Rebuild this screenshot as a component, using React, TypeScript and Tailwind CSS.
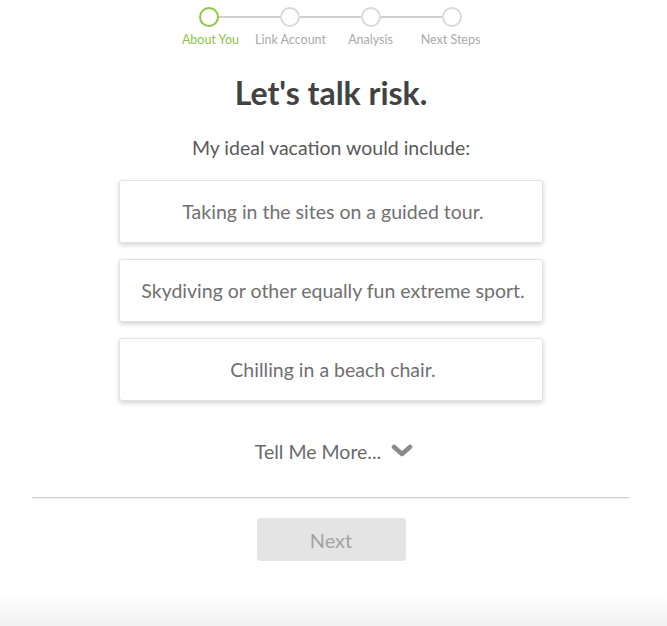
import React from "react";

const steps = ["About You", "Link Account", "Analysis", "Next Steps"];
const options = [
  "Taking in the sites on a guided tour.",
  "Skydiving or other equally fun extreme sport.",
  "Chilling in a beach chair.",
];

export default function App() {
  return (
    <div
      className="relative w-[667px] h-[626px] bg-white overflow-hidden"
      style={{ fontFamily: "Lato, 'Open Sans', sans-serif" }}
    >
      <div className="w-[662px]">
        {/* Stepper */}
        <div className="flex flex-col items-center pt-[7px] pr-[1px]">
          <div className="flex items-center">
            {steps.map((s, i) => (
              <React.Fragment key={s}>
                {i > 0 && <div className="w-[61px] h-[2px] bg-[#d0d0d0]" />}
                <div
                  className={
                    i === 0
                      ? "w-[20px] h-[20px] rounded-full border-2 border-[#8dc63f] bg-white"
                      : "w-[20px] h-[20px] rounded-full border-2 border-[#d9d9d9] bg-white"
                  }
                />
              </React.Fragment>
            ))}
          </div>
          <div className="flex mt-[6px]">
            {steps.map((s, i) => (
              <div
                key={s}
                className={
                  i === 0
                    ? "w-[80px] text-center text-[12.5px] leading-[14px] whitespace-nowrap text-[#8dc63f]"
                    : "w-[80px] text-center text-[12.5px] leading-[14px] whitespace-nowrap text-[#aaaaaa]"
                }
              >
                {s}
              </div>
            ))}
          </div>
        </div>

        {/* Heading */}
        <h1 className="mt-[27px] text-center text-[32px] leading-[38px] font-bold text-[#424242]">
          Let's talk risk.
        </h1>
        <p className="mt-[24px] text-center text-[19.5px] leading-[24px] text-[#5a5a5a]">
          My ideal vacation would include:
        </p>

        {/* Options */}
        <div className="mt-[20px] flex flex-col items-center gap-[16px]">
          {options.map((o) => (
            <div
              key={o}
              className="w-[424px] h-[63px] flex items-center justify-center pl-[4px] rounded-[3px] border border-[#e2e2e2] bg-white shadow-[0_2px_5px_rgba(0,0,0,0.18)] text-[19.5px] text-[#707070]"
            >
              {o}
            </div>
          ))}
        </div>

        {/* Tell me more */}
        <div className="mt-[39px] h-[24px] flex items-center justify-center gap-[10px] pl-[6px] text-[19.5px] leading-[24px] text-[#6a6a6a]">
          <span>Tell Me More...</span>
          <svg width="22" height="14" viewBox="0 0 22 14" className="mt-[-3px]">
            <path
              d="M3 3 L11 10 L19 3"
              fill="none"
              stroke="#8a8a8a"
              strokeWidth="4.5"
              strokeLinecap="round"
              strokeLinejoin="round"
            />
          </svg>
        </div>

        {/* Divider */}
        <div className="mx-auto mt-[33px] w-[598px] h-[1px] bg-[#cfcfcf]" />
        <div className="mx-auto w-[598px] h-[1px] bg-[#f4f4f4]" />

        {/* Next */}
        <div className="flex justify-center mt-[19px]">
          <button className="w-[149px] h-[43px] rounded-[4px] bg-[#e4e4e4] text-[20px] text-[#a3a3a3]">
            Next
          </button>
        </div>
      </div>

      {/* Bottom gradient */}
      <div className="absolute left-0 right-0 bottom-0 h-[32px] bg-gradient-to-b from-white to-[#f1f1f1]" />
    </div>
  );
}
